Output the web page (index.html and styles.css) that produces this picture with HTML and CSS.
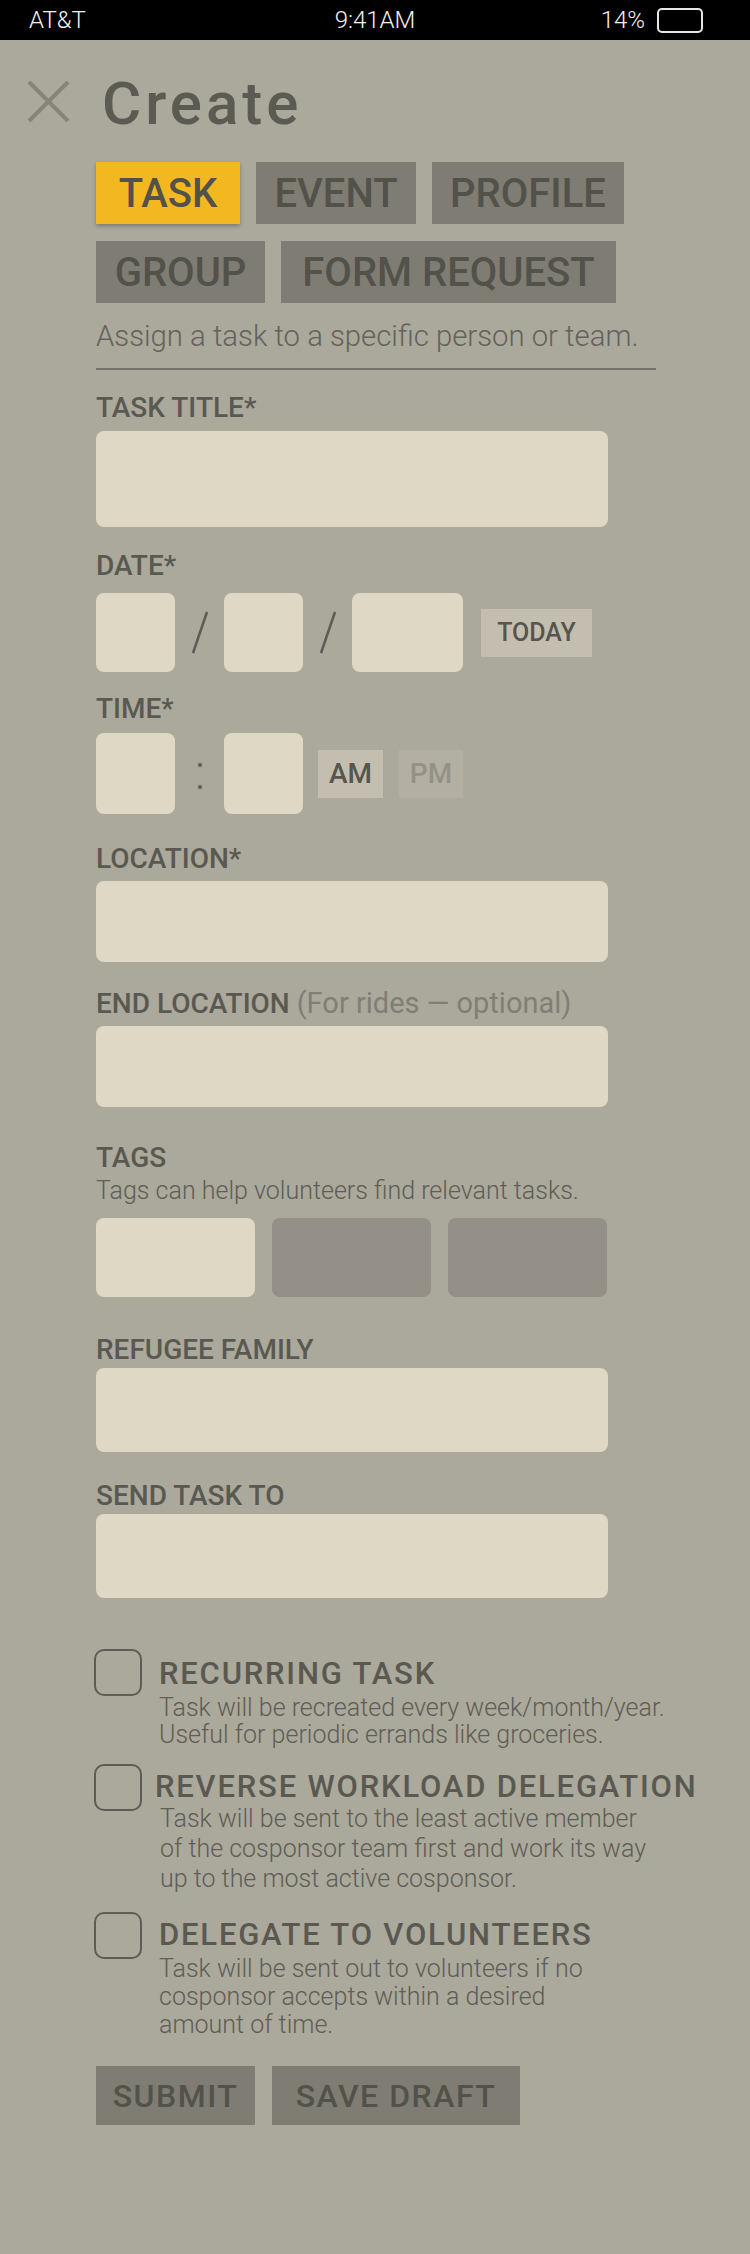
FILE: index.html
```html
<!DOCTYPE html>
<html lang="en">
<head>
<meta charset="utf-8">
<title>Create</title>
<link rel="stylesheet" href="styles.css">
</head>
<body>
<div class="status">
  <span class="carrier">AT&amp;T</span>
  <span class="clock">9:41AM</span>
  <span class="power"><span class="pct">14%</span><span class="battery"></span></span>
</div>

<header class="header">
  <svg class="close" width="43" height="43" viewBox="0 0 43 43" aria-hidden="true">
    <line x1="2" y1="2" x2="41" y2="41"/>
    <line x1="41" y1="2" x2="2" y2="41"/>
  </svg>
  <h1 class="title">Create</h1>
</header>

<main class="form">
  <div class="tabs">
    <span class="tab tab-active tab-task">TASK</span>
    <span class="tab tab-event">EVENT</span>
    <span class="tab tab-profile">PROFILE</span>
    <span class="tab tab-group">GROUP</span>
    <span class="tab tab-form">FORM REQUEST</span>
  </div>

  <p class="intro">Assign a task to a specific person or team.</p>
  <div class="divider"></div>

  <section class="field f-title">
    <span class="field-label">TASK TITLE*</span>
    <div class="input input-title"></div>
  </section>

  <section class="field f-date">
    <span class="field-label">DATE*</span>
    <div class="row">
      <div class="box box-sm"></div>
      <span class="sep"><svg width="16" height="43" viewBox="0 0 16 43"><line x1="15" y1="1" x2="1" y2="42"/></svg></span>
      <div class="box box-sm"></div>
      <span class="sep"><svg width="16" height="43" viewBox="0 0 16 43"><line x1="15" y1="1" x2="1" y2="42"/></svg></span>
      <div class="box box-lg"></div>
      <span class="chip chip-today">TODAY</span>
    </div>
  </section>

  <section class="field f-time">
    <span class="field-label">TIME*</span>
    <div class="row">
      <div class="box box-sm box-time"></div>
      <span class="sep sep-colon"><i class="dot"></i><i class="dot"></i></span>
      <div class="box box-sm box-time"></div>
      <span class="chip chip-am">AM</span>
      <span class="chip chip-pm">PM</span>
    </div>
  </section>

  <section class="field f-loc">
    <span class="field-label">LOCATION*</span>
    <div class="input input-80"></div>
  </section>

  <section class="field f-end">
    <span class="field-label">END LOCATION <span class="hint">(For rides — optional)</span></span>
    <div class="input input-80"></div>
  </section>

  <section class="field f-tags">
    <span class="field-label">TAGS</span>
    <p class="sub">Tags can help volunteers find relevant tasks.</p>
    <div class="tags">
      <div class="tag tag-on"></div>
      <div class="tag"></div>
      <div class="tag"></div>
    </div>
  </section>

  <section class="field f-fam">
    <span class="field-label">REFUGEE FAMILY</span>
    <div class="input input-84"></div>
  </section>

  <section class="field f-send">
    <span class="field-label">SEND TASK TO</span>
    <div class="input input-84"></div>
  </section>

  <div class="checks">
    <div class="check">
      <span class="checkbox"></span>
      <div class="check-text">
        <div class="check-title">RECURRING TASK</div>
        <p class="check-desc">Task will be recreated every week/month/year.<br>Useful for periodic errands like groceries.</p>
      </div>
    </div>
    <div class="check">
      <span class="checkbox"></span>
      <div class="check-text check-text-shift">
        <div class="check-title">REVERSE WORKLOAD DELEGATION</div>
        <p class="check-desc check-desc-wide">Task will be sent to the least active member<br>of the cosponsor team first and work its way<br>up to the most active cosponsor.</p>
      </div>
    </div>
    <div class="check check-last">
      <span class="checkbox"></span>
      <div class="check-text check-text-last">
        <div class="check-title">DELEGATE TO VOLUNTEERS</div>
        <p class="check-desc check-desc-last">Task will be sent out to volunteers if no<br>cosponsor accepts within a desired<br>amount of time.</p>
      </div>
    </div>
  </div>

  <div class="actions">
    <span class="btn btn-submit">SUBMIT</span>
    <span class="btn btn-draft">SAVE DRAFT</span>
  </div>
</main>
</body>
</html>
```

FILE: styles.css
```css
* { box-sizing: border-box; }

html {
  background: #aba89c;
}

html, body {
  margin: 0;
  padding: 0;
}

body {
  font-family: Roboto, "Liberation Sans", sans-serif;
  color: #5a5951;
}

/* status bar */
.status {
  height: 40px;
  background: #000;
  color: #f2f2f2;
  display: grid;
  grid-template-columns: 1fr auto 1fr;
  align-items: center;
  padding: 0 29px;
  font-weight: 300;
  font-size: 24px;
  line-height: 1;
}
.clock { justify-self: center; }
.power {
  justify-self: end;
  display: flex;
  align-items: center;
  gap: 12px;
  margin-right: 18px;
}
.battery {
  width: 46px;
  height: 25px;
  border: 2px solid #e6e6e6;
  border-radius: 5px;
}

/* header */
.header {
  display: flex;
  align-items: center;
  height: 60px;
  margin-top: 34px;
  padding-left: 27px;
  gap: 32px;
}
.close {
  margin-bottom: 6px;
  flex: none;
}
.close line {
  stroke: #87857a;
  stroke-width: 4;
}
.title {
  margin: 0;
  font-size: 60px;
  line-height: 60px;
  font-weight: 500;
  letter-spacing: 4px;
  color: #5b5a53;
}

/* form */
.form {
  padding-left: 96px;
  padding-bottom: 60px;
}

.tabs {
  display: flex;
  flex-wrap: wrap;
  gap: 17px 16px;
  width: 570px;
  margin-top: 28px;
}
.tab {
  height: 62px;
  display: flex;
  justify-content: center;
  background: #7f7c73;
  color: #52514a;
  font-size: 40px;
  line-height: 64px;
  font-weight: 500;
}
.tab-task { width: 144px; }
.tab-event { width: 160px; }
.tab-profile { width: 192px; }
.tab-group { width: 169px; }
.tab-form { width: 335px; }
.tab-active {
  background: #f3b81f;
  box-shadow: 0 2px 4px rgba(0, 0, 0, 0.28);
}

.intro {
  margin: 18px 0 0;
  font-size: 29.3px;
  line-height: 30px;
  font-weight: 300;
  color: #64625b;
}
.divider {
  width: 560px;
  height: 2px;
  margin-top: 17px;
  background: #75736c;
}

.field-label {
  display: block;
  font-size: 28px;
  line-height: 27px;
  font-weight: 500;
  color: #5a5951;
  margin-bottom: 9px;
}
.hint {
  font-size: 29px;
  font-weight: 400;
  color: #817e75;
}

.input {
  width: 512px;
  background: #dfd8c4;
  border-radius: 8px;
}
.input-title { height: 96px; }
.input-80 { height: 81px; }
.input-84 { height: 84px; }

.f-title { margin-top: 24px; }
.f-title .field-label { margin-bottom: 10px; }
.f-date { margin-top: 25px; }
.f-date .field-label { margin-bottom: 14px; }
.f-time { margin-top: 23px; }
.f-time .field-label { margin-bottom: 11px; }
.f-loc { margin-top: 31px; }
.f-end { margin-top: 28px; }
.f-tags { margin-top: 37px; }
.f-fam { margin-top: 39px; }
.f-fam .field-label { margin-bottom: 5px; }
.f-send { margin-top: 30px; }
.f-send .field-label { margin-bottom: 5px; }

.row {
  display: flex;
  align-items: center;
}
.box {
  height: 79px;
  background: #dfd8c4;
  border-radius: 8px;
}
.box-sm { width: 79px; }
.box-lg { width: 111px; }
.box-time { height: 81px; }

.sep {
  width: 49px;
  display: flex;
  justify-content: center;
  align-items: center;
}
.sep line {
  stroke: #5d5c55;
  stroke-width: 2.6;
}
.sep-colon {
  flex-direction: column;
  gap: 18px;
  padding-top: 4px;
}
.dot {
  width: 4px;
  height: 4px;
  border-radius: 50%;
  background: #5d5c55;
}

.chip {
  height: 48px;
  font-weight: 500;
  display: flex;
  align-items: center;
  justify-content: center;
}
.chip-today {
  width: 111px;
  margin-left: 18px;
  background: #c4beb0;
  color: #56554e;
  font-size: 25px;
}
.chip-am {
  width: 65px;
  margin-left: 15px;
  background: #c4beb0;
  color: #56554e;
  font-size: 28px;
}
.chip-pm {
  width: 64px;
  margin-left: 16px;
  background: #b3afa3;
  color: #949186;
  font-size: 28px;
}

.sub {
  margin: -2px 0 0;
  font-size: 25px;
  line-height: 25px;
  font-weight: 300;
  color: #5f5d56;
}
.tags {
  display: flex;
  gap: 17px;
  margin-top: 15px;
}
.tag {
  width: 159px;
  height: 79px;
  border-radius: 8px;
  background: #948f87;
}
.tag-on { background: #dfd8c4; }

/* checkboxes */
.checks {
  margin-top: 51px;
  margin-left: -2px;
  display: flex;
  flex-direction: column;
  gap: 16px;
}
.check {
  display: flex;
  gap: 17px;
}
.check-last { margin-top: 2px; }
.checkbox {
  flex: none;
  width: 48px;
  height: 47px;
  border: 2px solid #5d5c55;
  border-radius: 10px;
}
.check-text { padding-top: 9px; }
.check-text-shift { margin-left: -4px; padding-top: 7px; }
.check-text-last { padding-top: 7px; }
.check-title {
  font-size: 31px;
  line-height: 31px;
  font-weight: 500;
  letter-spacing: 1.8px;
  color: #5a5951;
}
.check-desc {
  margin: 5px 0 0;
  font-size: 25px;
  line-height: 27px;
  font-weight: 300;
  color: #5f5d56;
}
.check-desc-wide {
  padding-left: 5px;
  margin-top: 2px;
  line-height: 30px;
}
.check-desc-last {
  line-height: 28px;
}

.actions {
  display: flex;
  gap: 17px;
  margin-top: 27px;
}
.btn {
  height: 59px;
  background: #7f7c73;
  color: #52514a;
  font-size: 32px;
  line-height: 61px;
  font-weight: 500;
  letter-spacing: 1.5px;
  display: flex;
  justify-content: center;
}
.btn-submit { width: 159px; }
.btn-draft { width: 248px; }
```
